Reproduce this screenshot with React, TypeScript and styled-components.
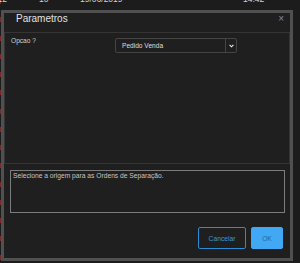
import styled, { createGlobalStyle } from "styled-components";

const GlobalStyle = createGlobalStyle`
  body {
    margin: 0;
    background: #1c1c1c;
    font-family: "Liberation Sans", Arial, sans-serif;
    overflow: hidden;
  }
`;

const Screen = styled.div`
  position: relative;
  width: 300px;
  height: 263px;
  overflow: hidden;
`;

// the order list that sits behind the dialog
const Grid = styled.div`
  margin-top: -10px;
`;

const GridRow = styled.div`
  display: grid;
  grid-template-columns: 1px 6px 73px 163px 1fr;
  align-items: center;
  height: 18.25px;
  font-size: 8.5px;
  line-height: 18.25px;
  color: #d2d2d2;
  white-space: nowrap;
`;

const Flag = styled.span`
  display: block;
  width: 1px;
  height: 5px;
  margin-top: 5px;
  background: #7e2727;
`;

const Cell = styled.span<{ $align?: "left" | "right"; $pad?: number }>`
  display: block;
  text-align: ${(p) => p.$align ?? "left"};
  padding-left: ${(p) => p.$pad ?? 0}px;
  direction: ${(p) => (p.$align === "right" ? "rtl" : "ltr")};
`;

const Dialog = styled.div`
  position: absolute;
  left: 1px;
  top: 10px;
  width: 292px;
  height: 251px;
  box-sizing: border-box;
  border: 3px solid #505050;
  background: #1f1f1f;
  display: flex;
  flex-direction: column;
`;

const Header = styled.div`
  height: 19px;
  display: flex;
  justify-content: space-between;
  align-items: flex-start;
  padding: 0 6px 0 12px;
`;

const Title = styled.h2`
  margin: 0;
  font-size: 10px;
  line-height: 11px;
  font-weight: normal;
  color: #e2e2e2;
`;

const Close = styled.button`
  background: none;
  border: 0;
  padding: 0;
  margin-top: 1px;
  font-family: "Liberation Sans", Arial, sans-serif;
  font-size: 10px;
  line-height: 10px;
  color: #8a8a8a;
`;

const Panel = styled.div`
  height: 132px;
  box-sizing: border-box;
  border: 1px solid #353535;
  padding: 5px 0 0 6px;
`;

const FieldRow = styled.div`
  display: flex;
  align-items: flex-start;
`;

const Label = styled.label`
  width: 104px;
  margin-top: -1px;
  font-size: 6.6px;
  line-height: 8px;
  color: #cfcfcf;
`;

const Select = styled.div`
  width: 122px;
  height: 15px;
  box-sizing: border-box;
  border: 1px solid #454545;
  border-radius: 2px;
  display: flex;
  align-items: stretch;
`;

const SelectValue = styled.span`
  flex: 1;
  display: flex;
  align-items: center;
  padding-left: 6px;
  font-size: 6.6px;
  color: #dedede;
`;

const SelectArrow = styled.span`
  width: 10px;
  border-left: 1px solid #454545;
  display: flex;
  align-items: center;
  justify-content: center;
`;

const Message = styled.textarea`
  display: block;
  margin: 6px 5px 0 6px;
  height: 43px;
  box-sizing: border-box;
  border: 1px solid #7c7c7c;
  border-radius: 0;
  padding: 1px 2px;
  background: transparent;
  resize: none;
  outline: none;
  font-family: "Liberation Sans", Arial, sans-serif;
  font-size: 6.7px;
  line-height: 8px;
  color: #c4c4c4;
`;

const Footer = styled.div`
  display: flex;
  justify-content: flex-end;
  gap: 5px;
  padding: 14px 7px 0 0;
`;

const Button = styled.button<{ $primary?: boolean; $w: number }>`
  width: ${(p) => p.$w}px;
  height: 22px;
  box-sizing: border-box;
  border-radius: 2px;
  padding: 0;
  font-family: "Liberation Sans", Arial, sans-serif;
  font-size: 6.7px;
  border: 1px solid ${(p) => (p.$primary ? "#41a9f4" : "#2b8bd3")};
  background: ${(p) => (p.$primary ? "#41a9f4" : "transparent")};
  color: ${(p) => (p.$primary ? "#22679c" : "#3b98dd")};
`;

const rows = Array.from({ length: 15 }, (_, i) => i);

export default function App() {
  return (
    <Screen>
      <GlobalStyle />
      <Grid>
        {rows.map((i) => (
          <GridRow key={i}>
            <Flag />
            {i === 0 ? (
              <>
                <Cell $align="right">12</Cell>
                <Cell $pad={32}>10</Cell>
                <Cell>19/06/2019</Cell>
                <Cell>14:42</Cell>
              </>
            ) : null}
          </GridRow>
        ))}
      </Grid>

      <Dialog>
        <Header>
          <Title>Parametros</Title>
          <Close>×</Close>
        </Header>
        <Panel>
          <FieldRow>
            <Label>Opcao ?</Label>
            <Select>
              <SelectValue>Pedido Venda</SelectValue>
              <SelectArrow>
                <svg width="5" height="4" viewBox="0 0 5 4">
                  <path d="M0.6 0.8 L2.5 2.8 L4.4 0.8" fill="none" stroke="#f0f0f0" strokeWidth="1.1" />
                </svg>
              </SelectArrow>
            </Select>
          </FieldRow>
        </Panel>
        <Message readOnly value="Selecione a origem para as Ordens de Separação." />
        <Footer>
          <Button $w={48}>Cancelar</Button>
          <Button $w={32} $primary>OK</Button>
        </Footer>
      </Dialog>
    </Screen>
  );
}
